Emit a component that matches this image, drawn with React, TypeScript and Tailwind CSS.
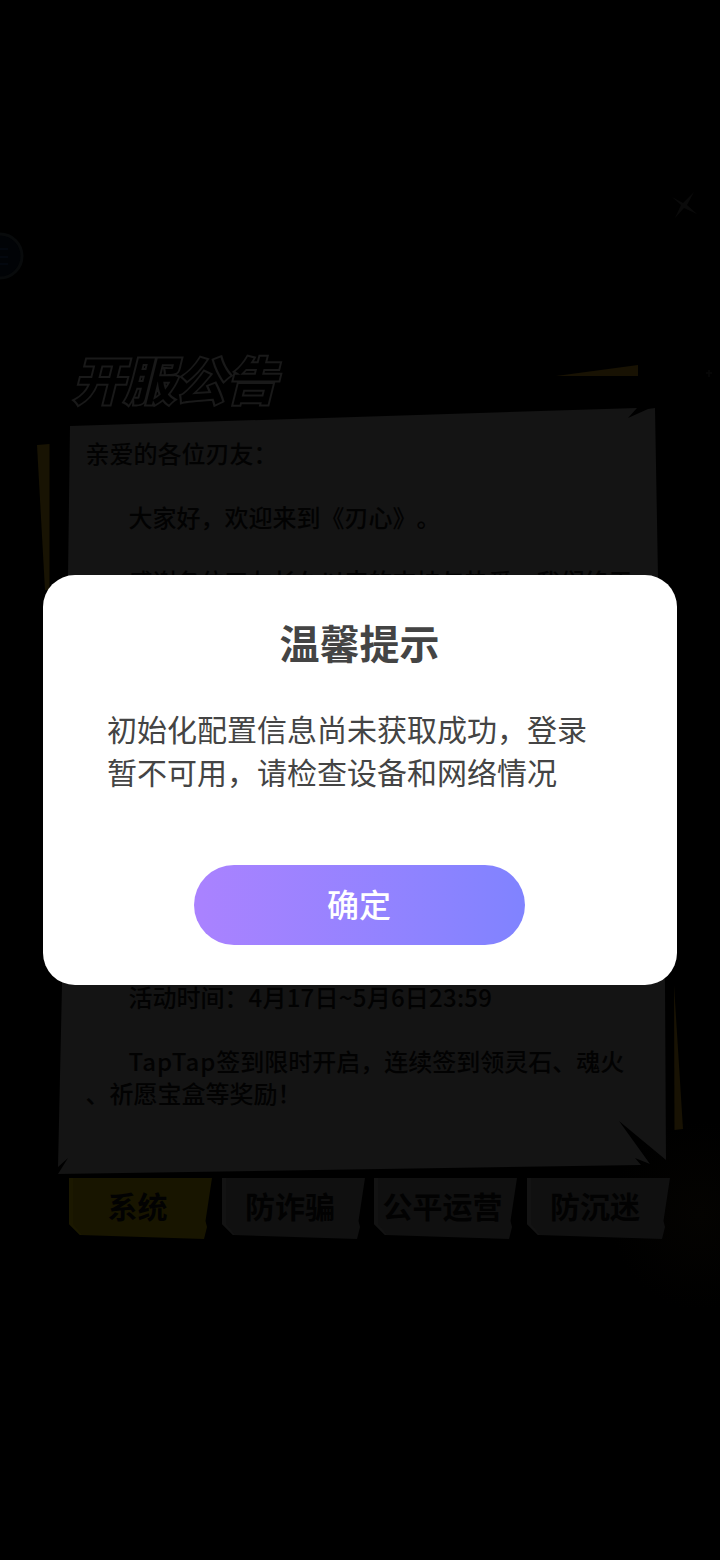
import React from 'react';

const tabs = [
  { label: '系统', active: true },
  { label: '防诈骗', active: false },
  { label: '公平运营', active: false },
  { label: '防沉迷', active: false },
];

// Torn-paper board behind the notice text
const BoardArt: React.FC = () => (
  <svg className="absolute inset-0" width="720" height="1560" viewBox="0 0 720 1560" fill="none">
    <defs>
      <radialGradient id="ember">
        <stop offset="0" stopColor="#040301" />
        <stop offset="1" stopColor="#000000" />
      </radialGradient>
    </defs>
    <ellipse cx="700" cy="1215" rx="90" ry="95" fill="url(#ember)" />
    <circle cx="0" cy="256" r="22" fill="#010306" stroke="#080a0b" strokeWidth="3" />
    <path d="M0 249h8M0 257h8M0 264h8" stroke="#040a12" strokeWidth="1.5" />
    <path d="M672 197L683 203L694 192L687 205L697 214L684 208L675 218L681 205Z" fill="#0a0a0a" />
    <path d="M709 370v7M706 373h6" stroke="#080808" strokeWidth="1.5" />
    <path d="M556 376L638 365V376Z" fill="#181203" />
    <path d="M37 445L49.500 444V590H45Z" fill="#181303" />
    <path d="M674 985L683 1129L674.500 1130Z" fill="#181203" />
    <path
      d="M70 426L637 408L628 418L648 409L655 408L658 577L665 985L666 1160L619 1121L650 1164L635 1158L641 1165L58 1174L68 1158L58 1167L62 985L68 577Z"
      fill="#141414"
    />
  </svg>
);

const NoticeTab: React.FC<{ label: string; active: boolean }> = ({ label, active }) => (
  <div className="relative h-[62px] w-[143px]">
    <svg className="absolute inset-0" width="143" height="62" viewBox="0 0 143 62">
      <path
        d="M0 0H143L136.500 43L138 49L135 61L11 57L0 46Z"
        fill={active ? '#181500' : '#101010'}
      />
      <path d="M0 0H4V46L13 57H11L0 46Z" fill={active ? '#1b1800' : '#131313'} />
    </svg>
    <span className="relative flex h-[55px] items-center justify-center pr-[6px] text-[30px] font-bold whitespace-nowrap text-[#020202]">
      {label}
    </span>
  </div>
);

const App: React.FC = () => {
  return (
    <div className="relative h-[1560px] w-[720px] overflow-hidden bg-black font-['Noto_Sans_CJK_SC',sans-serif] [text-spacing-trim:space-all]">
      <BoardArt />

      {/* Server announcement */}
      <div className="relative flex h-full flex-col pt-[345px]">
        <h1 className="ml-[75px] h-[92px] origin-left -skew-x-[14deg] text-[51px] leading-[66px] font-bold text-black [-webkit-text-stroke:4px_#191919] [paint-order:stroke_fill]">
          开服公告
        </h1>
        <div className="flex h-[741px] flex-col pr-20 pl-[85.500px] text-2xl leading-8 font-medium whitespace-nowrap text-[#020202]">
          <p>亲爱的各位刃友：</p>
          <p className="mt-8 pl-[43px]">大家好，欢迎来到《刃心》。</p>
          <p className="mt-8 pl-[43px]">感谢各位刃友长久以来的支持与热爱，我们终于</p>
          <p className="mt-[384px] pl-[43px]">
            活动时间：<span className="tracking-[0.25px]">4月17日~5月6日23:59</span>
          </p>
          <p className="mt-8 pl-[43px]">
            <span className="tracking-[1px]">TapTap</span>签到限时开启，连续签到领灵石、魂火
          </p>
          <p>、祈愿宝盒等奖励！</p>
        </div>
        <div className="flex gap-[9.500px] pl-[69px]">
          {tabs.map((tab) => (
            <NoticeTab key={tab.label} label={tab.label} active={tab.active} />
          ))}
        </div>
      </div>

      {/* Dialog */}
      <div className="absolute top-[574.500px] left-[42.500px] flex h-[410px] w-[634px] flex-col items-center rounded-[32px] bg-white text-[#444444]">
        <h2 className="mt-[37px] text-[40px] leading-[60px] font-bold">温馨提示</h2>
        <p className="mt-[35px] w-[506px] pl-[0.5px] text-[30px] leading-[43.500px]">
          初始化配置信息尚未获取成功，登录
          <br />
          暂不可用，请检查设备和网络情况
        </p>
        <button className="mt-[71px] mr-px flex h-20 w-[331px] items-center justify-center rounded-full bg-linear-to-r from-[#aa82ff] to-[#8083ff] pb-1 text-[32px] font-medium text-white">
          确定
        </button>
      </div>
    </div>
  );
};

export default App;
